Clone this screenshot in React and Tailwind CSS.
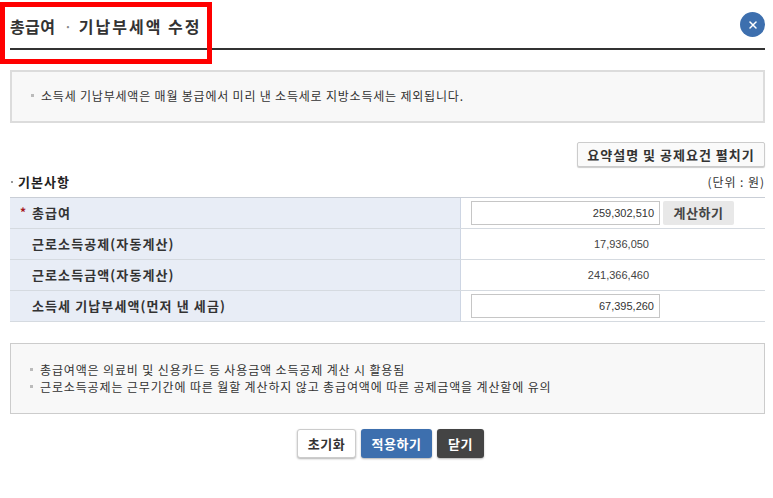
import React from "react";
import { X } from "lucide-react";

const font = "font-['Noto_Sans_CJK_KR','Liberation_Sans',sans-serif]";
const digits = "font-['Liberation_Sans',sans-serif]";

function Row({ label, required, children }) {
  return (
    <div className="flex h-[31px] border-b border-[#d5dae0]">
      <div className="flex w-[451px] shrink-0 items-center border-r border-[#cdd5e3] bg-[#e8edf6] pl-[10px] text-[13px] font-bold tracking-[1.1px] text-[#333]">
        <span className="w-[12px] pb-[2px] text-[12px] text-[#a5161d]">{required ? "*" : ""}</span>
        {label}
      </div>
      <div className={`${digits} flex flex-1 items-center pl-[10px] text-[11px] text-[#444]`}>{children}</div>
    </div>
  );
}

function AmountInput({ value }) {
  return (
    <div className="flex h-[24px] w-[189px] items-center justify-end border border-[#c6c6c6] bg-white pr-[5px] text-[11px] text-[#333]">
      {value}
    </div>
  );
}

function Bullet() {
  return <span className="mr-[7px] ml-[19px] inline-block h-[3px] w-[3px] shrink-0 bg-[#bbb]" />;
}

export default function App() {
  return (
    <div className={`${font} relative h-[498px] w-[773px] overflow-hidden bg-white pr-[8px] pl-[10px] text-[#333]`}>
      {/* red marker over the title */}
      <div className="absolute top-[2px] left-0 h-[62px] w-[212px] border-[5px] border-[#ff0000]" />

      <div className="flex h-[50px] items-start justify-between border-b-2 border-[#333]">
        <h1 className="mt-[14px] text-[16px] leading-[24px] font-bold tracking-[0.4px] text-[#333]">
          총급여 <span className="mr-[2px] ml-[4px] font-normal text-[#888]">·</span>{" "}
          <span className="tracking-[2px]">기납부세액 수정</span>
        </h1>
        <div className="mt-[12px] flex h-[25px] w-[25px] items-center justify-center rounded-full bg-[#3d6fae] text-white">
          <X size={12} strokeWidth={3} />
        </div>
      </div>

      <div className="mt-[20px] flex h-[53px] items-center border-2 border-[#dcdcdc] bg-[#f8f8f8] pb-[2px] text-[12px] tracking-[0.8px] text-[#333]">
        <Bullet />
        소득세 기납부세액은 매월 봉급에서 미리 낸 소득세로 지방소득세는 제외됩니다.
      </div>

      <div className="mt-[19px] flex justify-end">
        <button className="h-[25px] w-[188px] rounded-[2px] border border-[#ccc] bg-[#fafafa] text-[13px] font-bold tracking-[1px] text-[#333] shadow-[0_1px_1px_rgba(0,0,0,0.2)]">
          요약설명 및 공제요건 펼치기
        </button>
      </div>

      <div className="mt-[4px] flex h-[22px] items-center justify-between">
        <div className="flex items-center text-[13px] font-bold tracking-[1px] text-[#222]">
          <span className="mr-[5px] ml-[1px] h-[2px] w-[2px] bg-[#999]" />
          기본사항
        </div>
        <div className="text-[12px] tracking-[0.95px] text-[#333]">(단위 : 원)</div>
      </div>

      <div className="mt-[4px] border-t border-[#c9ced6]">
        <Row label="총급여" required>
          <AmountInput value="259,302,510" />
          <button className={`${font} ml-[3px] h-[24px] w-[71px] rounded-[2px] bg-[#e8e8e8] text-[13px] font-bold tracking-[0.5px] text-[#444]`}>
            계산하기
          </button>
        </Row>
        <Row label="근로소득공제(자동계산)">
          <span className="w-[189px] pr-[11px] text-right">17,936,050</span>
        </Row>
        <Row label="근로소득금액(자동계산)">
          <span className="w-[189px] pr-[11px] text-right">241,366,460</span>
        </Row>
        <Row label="소득세 기납부세액(먼저 낸 세금)">
          <AmountInput value="67,395,260" />
        </Row>
      </div>

      <div className="mt-[21px] flex h-[71px] flex-col justify-center border border-[#ccc] bg-[#f8f8f8] pb-[2px] text-[12px] leading-[17px] tracking-[0.86px] text-[#333]">
        <div className="flex items-center">
          <Bullet />
          총급여액은 의료비 및 신용카드 등 사용금액 소득공제 계산 시 활용됨
        </div>
        <div className="flex items-center">
          <Bullet />
          근로소득공제는 근무기간에 따른 월할 계산하지 않고 총급여액에 따른 공제금액을 계산할에 유의
        </div>
      </div>

      <div className="mt-[15px] flex justify-center gap-[5px] pl-[6px] text-[13px] font-bold tracking-[0.5px]">
        <button className="h-[29px] w-[59px] rounded-[3px] border border-[#ccc] bg-white text-[#333] shadow-[0_1px_2px_rgba(0,0,0,0.3)]">
          초기화
        </button>
        <button className="h-[29px] w-[71px] rounded-[3px] bg-[#3d6fae] text-white shadow-[0_1px_2px_rgba(0,0,0,0.3)]">
          적용하기
        </button>
        <button className="h-[29px] w-[47px] rounded-[3px] bg-[#444] text-white shadow-[0_1px_2px_rgba(0,0,0,0.3)]">
          닫기
        </button>
      </div>
    </div>
  );
}
